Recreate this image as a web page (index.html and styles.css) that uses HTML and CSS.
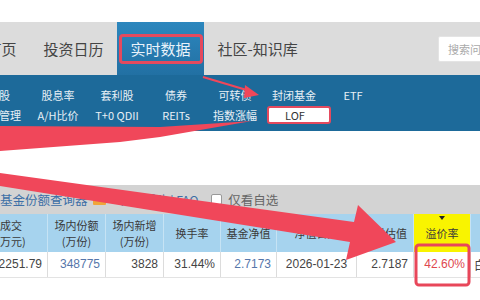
FILE: index.html
```html
<!DOCTYPE html>
<html lang="zh-CN">
<head>
<meta charset="utf-8">
<title>实时数据 - LOF</title>
<link rel="stylesheet" href="styles.css">
</head>
<body>
<div class="page">
  <div class="topbar"></div>
  <nav class="mainnav">
    <a class="nav-item">首页</a>
    <a class="nav-item">投资日历</a>
    <a class="nav-item active"><span class="active-label">实时数据</span></a>
    <a class="nav-item">社区-知识库</a>
    <div class="search">搜索问题</div>
  </nav>
  <div class="subnav">
    <div class="subnav-grid">
      <span>新股</span><span>股息率</span><span>套利股</span><span>债券</span><span>可转债</span><span>封闭基金</span><span>ETF</span>
      <span>现金管理</span><span>A/H比价</span><span>T+0 QDII</span><span>REITs</span><span>指数涨幅</span><span class="lof">LOF</span>
    </div>
  </div>
  <div class="blank"></div>
  <div class="toolbar">
    <span class="link">基金份额查询器</span>
    <span class="badge"></span>
    <span class="help">新手帮助 | FAQ</span>
    <span class="check"></span>
    <span class="only">仅看自选</span>
  </div>
  <table class="data">
    <colgroup>
      <col class="w73"><col class="w58"><col class="w58"><col class="w57"><col class="w56"><col class="w80"><col class="w57"><col class="w57"><col class="w60">
    </colgroup>
    <thead>
      <tr>
        <th>成交<br>(万元)</th>
        <th>场内份额<br>(万份)</th>
        <th>场内新增<br>(万份)</th>
        <th>换手率</th>
        <th>基金净值</th>
        <th>净值日期</th>
        <th>实时估值</th>
        <th class="sorted">溢价率</th>
        <th>申购费</th>
      </tr>
    </thead>
    <tbody>
      <tr>
        <td>2251.79</td>
        <td class="blue">348775</td>
        <td>3828</td>
        <td>31.44%</td>
        <td class="blue">2.7173</td>
        <td class="center">2026-01-23</td>
        <td>2.7187</td>
        <td class="red">42.60%</td>
        <td class="left">白银</td>
      </tr>
    </tbody>
  </table>
  <svg class="annot" width="480" height="300" viewBox="0 0 480 300">
    <path d="M203 77 L250 91" stroke="#f0475a" stroke-width="2.2" fill="none"/>
    <polygon points="245,85 259,95 244,98" fill="#f0475a"/>
    <polygon points="0,126 160,127 252,121 160,137 120,142 0,151" fill="#f0475a"/>
    <polygon points="0,173 354,222 358,205 396,242 346,260 350,242 0,186" fill="#f0475a"/>
    <rect x="416" y="245" width="53" height="40" rx="3" fill="none" stroke="#e8475a" stroke-width="3"/>
  </svg>
</div>
</body>
</html>
```
FILE: styles.css
```css
* { box-sizing: border-box; }
html, body { margin: 0; padding: 0; }
body {
  width: 480px;
  height: 300px;
  overflow: hidden;
  background: #fff;
  font-family: "Noto Sans CJK SC", "Liberation Sans", sans-serif;
}
.page {
  position: relative;
  width: 480px;
  height: 300px;
  overflow: hidden;
}
.topbar { height: 22px; background: #fff; }

.mainnav {
  display: flex;
  align-items: stretch;
  height: 53px;
  width: 525px;
  margin-left: -27px;
  background: #dcdcdc;
}
.nav-item {
  display: flex;
  align-items: center;
  padding: 0 13.5px;
  font-size: 15px;
  line-height: 20px;
  color: #444;
  white-space: nowrap;
}
.nav-item.active {
  padding: 0 1.5px;
  background: linear-gradient(#2c87be, #2270a3);
}
.active-label {
  border: 3px solid #e44a5e;
  border-radius: 4px;
  padding: 2px 9px;
  color: #e8f2fa;
}
.search {
  margin-left: auto;
  align-self: center;
  width: 60px;
  height: 26px;
  background: #fff;
  border: 1px solid #e4e4e4;
  border-radius: 2px;
  padding-left: 9px;
  font-size: 11px;
  line-height: 24px;
  color: #aaa;
  white-space: nowrap;
  overflow: hidden;
}

.subnav {
  height: 56px;
  padding-top: 10px;
  background: #1d6a9a;
}
.subnav-grid {
  display: grid;
  grid-template-columns: repeat(7, 59px);
  grid-auto-rows: 20px;
  margin-left: -30.5px;
}
.subnav-grid span {
  display: flex;
  align-items: center;
  justify-content: center;
  font-size: 11px;
  color: #e8f0f6;
  white-space: nowrap;
}
.subnav-grid .lof {
  justify-self: start;
  width: 64px;
  height: 18px;
  margin-left: 2.5px;
  margin-top: 1px;
  padding-right: 8px;
  background: #fff;
  color: #333;
  border: 2.5px solid #e44a5e;
  border-radius: 3px;
}

.blank { height: 54px; }

.toolbar {
  display: flex;
  align-items: center;
  height: 29px;
  background: #d3d3d3;
  font-size: 12.5px;
  line-height: 16px;
  white-space: nowrap;
}
.link { color: #3d6fa6; }
.badge {
  width: 13px;
  height: 8px;
  margin-left: 5px;
  margin-top: 3px;
  background: #f0a53a;
  border-radius: 1px;
}
.help { margin-left: 14px; color: #3d6fa6; font-size: 12px; }
.check {
  width: 11px;
  height: 11px;
  margin-left: 13px;
  background: #fff;
  border: 1px solid #999;
  border-radius: 2px;
}
.only { margin-left: 6px; color: #666; }

.data {
  border-collapse: collapse;
  table-layout: fixed;
  width: 556px;
  margin-left: -26px;
  font-family: "Liberation Sans", "Noto Sans CJK SC", sans-serif;
}
.w73 { width: 73px; }
.w58 { width: 58px; }
.w57 { width: 57px; }
.w56 { width: 56px; }
.w80 { width: 80px; }
.w60 { width: 60px; }
.data th {
  position: relative;
  height: 38px;
  padding: 0;
  background: #a6d3ee;
  border-left: 1px solid #c6e3f4;
  font-family: "Noto Sans CJK SC", sans-serif;
  font-weight: normal;
  font-size: 11px;
  line-height: 16px;
  color: #3a3a3a;
  white-space: nowrap;
}
.data th.sorted { background: #f9f400; }
.data th.sorted::before {
  content: "";
  position: absolute;
  top: 2px;
  left: 50%;
  margin-left: -3px;
  border-left: 3px solid transparent;
  border-right: 3px solid transparent;
  border-top: 4px solid #222;
}
.data td {
  height: 25px;
  padding: 0 5px;
  text-align: right;
  font-size: 12px;
  color: #444;
  border-left: 1px solid #dcdcdc;
  border-bottom: 1px solid #e3e3e3;
  white-space: nowrap;
  overflow: hidden;
}
.data td.blue { color: #5576aa; }
.data td.red { color: #e0474e; }
.data td.center { text-align: center; }
.data td.left { text-align: left; padding-left: 3px; }

.annot {
  position: absolute;
  left: 0;
  top: 0;
  pointer-events: none;
}
```
